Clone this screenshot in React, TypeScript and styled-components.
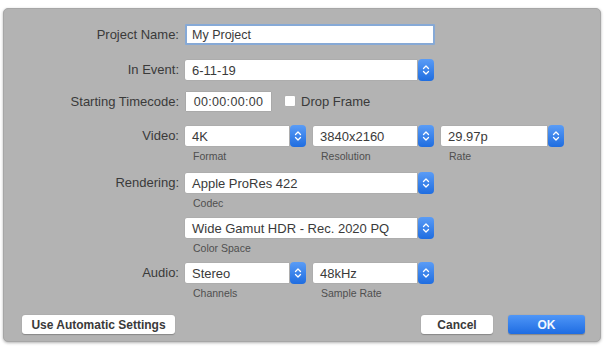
import React from "react";
import styled, { createGlobalStyle } from "styled-components";

const Global = createGlobalStyle`
  html, body { margin: 0; padding: 0; background: #ffffff; }
  body { font-family: "Liberation Sans", Arial, sans-serif; }
  * { box-sizing: border-box; }
`;

const Page = styled.div`
  width: 606px;
  height: 346px;
  padding: 8px 5px 4px 3px;
`;

const Panel = styled.div`
  width: 598px;
  height: 334px;
  background: #b3b3b3;
  border-radius: 5px;
  border: 1px solid #a6a6a6;
  box-shadow: 0 1px 3px rgba(0, 0, 0, 0.3);
  display: flex;
  flex-direction: column;
  padding-top: 15px;
`;

const Row = styled.div<{ $mt: number }>`
  display: flex;
  align-items: flex-start;
  margin-top: ${(p) => p.$mt}px;
`;

const Label = styled.div<{ $h: number }>`
  width: 176px;
  height: ${(p) => p.$h}px;
  line-height: ${(p) => p.$h}px;
  text-align: right;
  padding-right: 1px;
  margin-right: 5px;
  font-size: 13px;
  color: #3a3a3a;
  white-space: nowrap;
`;

const Controls = styled.div<{ $gap?: number }>`
  display: flex;
  align-items: flex-start;
  gap: ${(p) => p.$gap ?? 7}px;
`;

const TextField = styled.div<{ $w: number; $focus?: boolean; $center?: boolean }>`
  width: ${(p) => p.$w}px;
  height: 21px;
  background: #ffffff;
  border: ${(p) => (p.$focus ? "2px solid #86a9d6" : "1px solid #a9a9a9")};
  border-radius: 1px;
  font-size: 12.5px;
  color: #3a3a3a;
  display: flex;
  align-items: center;
  justify-content: ${(p) => (p.$center ? "center" : "flex-start")};
  padding-left: ${(p) => (p.$center ? 0 : 5)}px;
  letter-spacing: ${(p) => (p.$center ? 0.3 : 0)}px;
`;

const Field = styled.div`
  display: flex;
  flex-direction: column;
`;

const Popup = styled.div<{ $w: number }>`
  width: ${(p) => p.$w}px;
  height: 20px;
  display: flex;
  align-items: stretch;
`;

const PopupFace = styled.div`
  flex: 1;
  background: #ffffff;
  box-shadow: 0 0 0 0.5px #a8a8a8;
  border-radius: 2px 0 0 2px;
  font-size: 13px;
  color: #3a3a3a;
  display: flex;
  align-items: center;
  padding-left: 7px;
  white-space: nowrap;
`;

const Stepper = styled.div`
  width: 16px;
  margin-left: 1px;
  height: 22px;
  margin-top: -1px;
  border-radius: 4px;
  background: linear-gradient(#5a9cf6, #1f6de0);
  display: flex;
  align-items: center;
  justify-content: center;
`;

const Caption = styled.div`
  height: 14px;
  margin-top: 3px;
  padding-left: 8px;
  font-size: 10.5px;
  line-height: 14px;
  color: #4f4f4f;
`;

const Check = styled.div`
  width: 12px;
  height: 12px;
  margin: 4px 5px 0 12px;
  background: #fff;
  border-radius: 2px;
  border: 1px solid #b0b0b0;
`;

const CheckLabel = styled.div`
  font-size: 13px;
  line-height: 21px;
  color: #3a3a3a;
`;

const Buttons = styled.div`
  display: flex;
  align-items: center;
  margin-top: 15px;
  padding: 0 15px 0 18px;
`;

const Button = styled.div<{ $w: number; $primary?: boolean }>`
  width: ${(p) => p.$w}px;
  height: 19px;
  border-radius: 3px;
  background: ${(p) => (p.$primary ? "linear-gradient(#4f96f7, #1e6ce2)" : "#ffffff")};
  color: ${(p) => (p.$primary ? "#f4f8ff" : "#3a3a3a")};
  font-size: 12px;
  font-weight: bold;
  display: flex;
  align-items: center;
  justify-content: center;
  box-shadow: 0 0.5px 1px rgba(0, 0, 0, 0.25);
`;

const Spacer = styled.div`
  flex: 1;
`;

const Chevrons = () => (
  <svg width="8" height="12" viewBox="0 0 8 12">
    <path d="M1.5 4.5 L4 2 L6.5 4.5 M1.5 7.5 L4 10 L6.5 7.5" fill="none" stroke="#fff" strokeWidth="1.3" strokeLinecap="round" strokeLinejoin="round" />
  </svg>
);

const Select = ({ w, value }: { w: number; value: string }) => (
  <Popup $w={w}>
    <PopupFace>{value}</PopupFace>
    <Stepper>
      <Chevrons />
    </Stepper>
  </Popup>
);

const Sel = ({ w, value, caption }: { w: number; value: string; caption: string }) => (
  <Field>
    <Select w={w} value={value} />
    <Caption>{caption}</Caption>
  </Field>
);

export default function App() {
  return (
    <Page>
      <Global />
      <Panel>
        <Row $mt={0}>
          <Label $h={21}>Project Name:</Label>
          <TextField $w={250} $focus>My Project</TextField>
        </Row>
        <Row $mt={15}>
          <Label $h={20}>In Event:</Label>
          <Select w={249} value="6-11-19" />
        </Row>
        <Row $mt={11}>
          <Label $h={21}>Starting Timecode:</Label>
          <Controls $gap={0}>
            <TextField $w={87} $center>00:00:00:00</TextField>
            <Check />
            <CheckLabel>Drop Frame</CheckLabel>
          </Controls>
        </Row>
        <Row $mt={14}>
          <Label $h={20}>Video:</Label>
          <Controls>
            <Sel w={121} value="4K" caption="Format" />
            <Sel w={121} value="3840x2160" caption="Resolution" />
            <Sel w={123} value="29.97p" caption="Rate" />
          </Controls>
        </Row>
        <Row $mt={10}>
          <Label $h={20}>Rendering:</Label>
          <Sel w={249} value="Apple ProRes 422" caption="Codec" />
        </Row>
        <Row $mt={8}>
          <Label $h={20}></Label>
          <Sel w={249} value="Wide Gamut HDR - Rec. 2020 PQ" caption="Color Space" />
        </Row>
        <Row $mt={8}>
          <Label $h={20}>Audio:</Label>
          <Controls>
            <Sel w={121} value="Stereo" caption="Channels" />
            <Sel w={121} value="48kHz" caption="Sample Rate" />
          </Controls>
        </Row>
        <Buttons>
          <Button $w={153}>Use Automatic Settings</Button>
          <Spacer />
          <Button $w={72}>Cancel</Button>
          <Button $w={77} $primary style={{ marginLeft: 15 }}>OK</Button>
        </Buttons>
      </Panel>
    </Page>
  );
}
